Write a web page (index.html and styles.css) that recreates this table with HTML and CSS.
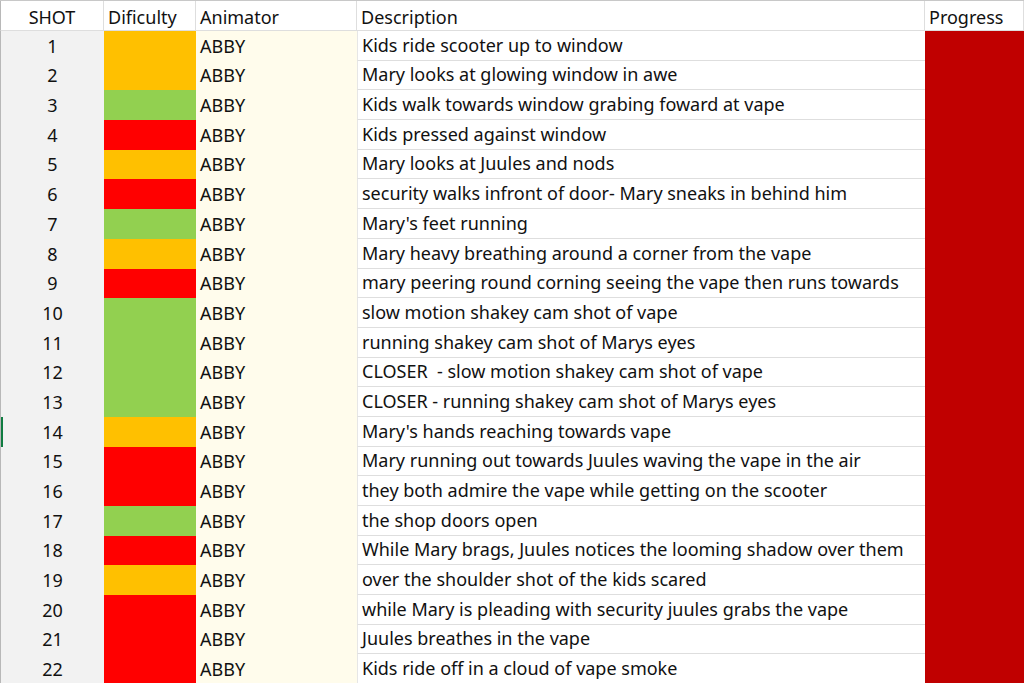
FILE: index.html
```html
<!DOCTYPE html>
<html>
<head>
<meta charset="utf-8">
<link rel="stylesheet" href="styles.css">
</head>
<body>
<div class="sheet">
  <div class="cell hd shot">SHOT</div>
  <div class="cell hd">Dificulty</div>
  <div class="cell hd">Animator</div>
  <div class="cell hd">Description</div>
  <div class="cell hd">Progress</div>

  <div class="cell num">1</div><div class="cell orange"></div><div class="cell anim">ABBY</div><div class="cell desc">Kids ride scooter up to window</div><div class="cell prog"></div>
  <div class="cell num">2</div><div class="cell orange"></div><div class="cell anim">ABBY</div><div class="cell desc">Mary looks at glowing window in awe</div><div class="cell prog"></div>
  <div class="cell num">3</div><div class="cell green"></div><div class="cell anim">ABBY</div><div class="cell desc">Kids walk towards window grabing foward at vape</div><div class="cell prog"></div>
  <div class="cell num">4</div><div class="cell red"></div><div class="cell anim">ABBY</div><div class="cell desc">Kids pressed against window</div><div class="cell prog"></div>
  <div class="cell num">5</div><div class="cell orange"></div><div class="cell anim">ABBY</div><div class="cell desc">Mary looks at Juules and nods</div><div class="cell prog"></div>
  <div class="cell num">6</div><div class="cell red"></div><div class="cell anim">ABBY</div><div class="cell desc">security walks infront of door- Mary sneaks in behind him</div><div class="cell prog"></div>
  <div class="cell num">7</div><div class="cell green"></div><div class="cell anim">ABBY</div><div class="cell desc">Mary's feet running</div><div class="cell prog"></div>
  <div class="cell num">8</div><div class="cell orange"></div><div class="cell anim">ABBY</div><div class="cell desc">Mary heavy breathing around a corner from the vape</div><div class="cell prog"></div>
  <div class="cell num">9</div><div class="cell red"></div><div class="cell anim">ABBY</div><div class="cell desc">mary peering round corning seeing the vape then runs towards</div><div class="cell prog"></div>
  <div class="cell num">10</div><div class="cell green"></div><div class="cell anim">ABBY</div><div class="cell desc">slow motion shakey cam shot of vape</div><div class="cell prog"></div>
  <div class="cell num">11</div><div class="cell green"></div><div class="cell anim">ABBY</div><div class="cell desc">running shakey cam shot of Marys eyes</div><div class="cell prog"></div>
  <div class="cell num">12</div><div class="cell green"></div><div class="cell anim">ABBY</div><div class="cell desc">CLOSER  - slow motion shakey cam shot of vape</div><div class="cell prog"></div>
  <div class="cell num">13</div><div class="cell green"></div><div class="cell anim">ABBY</div><div class="cell desc">CLOSER - running shakey cam shot of Marys eyes</div><div class="cell prog"></div>
  <div class="cell num active">14</div><div class="cell orange"></div><div class="cell anim">ABBY</div><div class="cell desc">Mary's hands reaching towards vape</div><div class="cell prog"></div>
  <div class="cell num">15</div><div class="cell red"></div><div class="cell anim">ABBY</div><div class="cell desc">Mary running out towards Juules waving the vape in the air</div><div class="cell prog"></div>
  <div class="cell num">16</div><div class="cell red"></div><div class="cell anim">ABBY</div><div class="cell desc">they both admire the vape while getting on the scooter</div><div class="cell prog"></div>
  <div class="cell num">17</div><div class="cell green"></div><div class="cell anim">ABBY</div><div class="cell desc">the shop doors open</div><div class="cell prog"></div>
  <div class="cell num">18</div><div class="cell red"></div><div class="cell anim">ABBY</div><div class="cell desc">While Mary brags, Juules notices the looming shadow over them</div><div class="cell prog"></div>
  <div class="cell num">19</div><div class="cell orange"></div><div class="cell anim">ABBY</div><div class="cell desc">over the shoulder shot of the kids scared</div><div class="cell prog"></div>
  <div class="cell num">20</div><div class="cell red"></div><div class="cell anim">ABBY</div><div class="cell desc">while Mary is pleading with security juules grabs the vape</div><div class="cell prog"></div>
  <div class="cell num">21</div><div class="cell red"></div><div class="cell anim">ABBY</div><div class="cell desc">Juules breathes in the vape</div><div class="cell prog"></div>
  <div class="cell num">22</div><div class="cell red"></div><div class="cell anim">ABBY</div><div class="cell desc">Kids ride off in a cloud of vape smoke</div><div class="cell prog"></div>
</div>
</body>
</html>
```

FILE: styles.css
```css
html, body {
  margin: 0;
  padding: 0;
  background: #ffffff;
  overflow: hidden;
}

.sheet {
  display: grid;
  grid-template-columns: 104px 92px 161px 568px 99px;
  grid-template-rows: 30px repeat(22, 29.7px);
  width: 1024px;
  height: 683px;
  font-family: "Noto Sans", "Liberation Sans", sans-serif;
  font-size: 18px;
  color: #111111;
  border-top: 1px solid #c8c8c8;
  box-sizing: border-box;
}

.cell {
  display: flex;
  align-items: flex-end;
  padding: 0 4px 3px 4px;
  line-height: 24px;
  white-space: pre;
  overflow: visible;
  box-sizing: border-box;
  min-width: 0;
}

.hd {
  padding-bottom: 1px;
  background: #ffffff;
  border-right: 1px solid #dedede;
  border-bottom: 1px solid #dedede;
}

.hd.shot,
.num {
  justify-content: center;
  border-left: 1px solid #b8b8b8;
}

.num {
  background: #f2f2f2;
}

.num.active {
  box-shadow: inset 2px 0 0 #107c41;
}

.orange { background: #ffc000; }
.green { background: #92d050; }
.red { background: #ff0000; }

.anim {
  background: #fffcec;
}

.desc {
  background: #ffffff;
  border-bottom: 1px solid #dedede;
  border-left: 1px solid #e6e6e6;
}

.prog {
  background: #c00000;
}
```
